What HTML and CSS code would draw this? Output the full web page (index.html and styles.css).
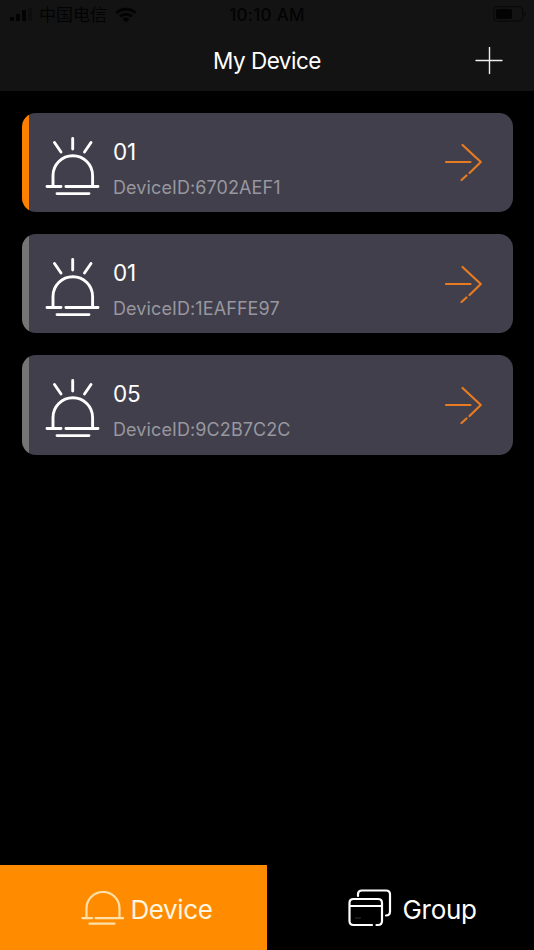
FILE: index.html
```html
<!DOCTYPE html>
<html lang="en">
<head>
    <meta charset="UTF-8">
    <meta name="viewport" content="width=device-width, initial-scale=1.0">
    <title>My Device</title>
    <link rel="stylesheet" href="styles.css">
</head>
<body>
    <svg class="defs" width="0" height="0">
        <symbol id="alarm" viewBox="0 0 56 60">
            <path d="M9.5 6.5l6.500 9.500M27.700 2.500v10.500M46 6.500L39.500 16"/>
            <path d="M8 50V39.500a19.800 19.800 0 0 1 39.600 0V50M2 50.500h14M20.900 50.500H53M12 57.600h32"/>
        </symbol>
        <symbol id="arrow" viewBox="0 0 40 40">
            <path d="M2 20h24.500M18.500 3l18.300 17-11.300 11M22.500 33.500L17.500 38"/>
        </symbol>
    </svg>

    <header class="header">
        <div class="status">
            <div class="carrier">
                <svg width="26" height="14" viewBox="0 0 26 14">
                    <path d="M0 9h4v4H0zM6 6h4v7H6zM12 2h4v11h-4z"/>
                    <path class="weak" d="M18 0h4v13h-4z"/>
                </svg>
                <span class="operator">中国电信</span>
                <svg class="wifi" width="22" height="16" viewBox="0 0 22 16">
                    <path d="M1.500 6a14 14 0 0 1 19 0M5 9.500a9 9 0 0 1 12 0"/>
                    <path class="dot" d="M7.500 12a5 5 0 0 1 7 0L11 15.500z"/>
                </svg>
            </div>
            <span class="time">10:10 AM</span>
            <svg class="battery" width="34" height="16" viewBox="0 0 34 16">
                <rect class="case" x=".7" y=".7" width="29" height="14.500" rx="4"/>
                <rect x="3" y="3" width="16" height="10" rx="2"/>
                <path d="M31.500 6q2 2 0 4z"/>
            </svg>
        </div>
        <div class="navbar">
            <h1>My Device</h1>
            <svg class="add" width="28" height="28" viewBox="0 0 28 28">
                <path d="M1 13.500h26M14.500 .5v26"/>
            </svg>
        </div>
    </header>

    <main class="devices">
        <div class="device online">
            <svg class="alarm"><use href="#alarm"/></svg>
            <div class="info">
                <div class="name">01</div>
                <div class="id">DeviceID:6702AEF1</div>
            </div>
            <svg class="arrow"><use href="#arrow"/></svg>
        </div>
        <div class="device">
            <svg class="alarm"><use href="#alarm"/></svg>
            <div class="info">
                <div class="name">01</div>
                <div class="id">DeviceID:1EAFFE97</div>
            </div>
            <svg class="arrow"><use href="#arrow"/></svg>
        </div>
        <div class="device">
            <svg class="alarm"><use href="#alarm"/></svg>
            <div class="info">
                <div class="name">05</div>
                <div class="id">DeviceID:9C2B7C2C</div>
            </div>
            <svg class="arrow"><use href="#arrow"/></svg>
        </div>
    </main>

    <nav class="tabs">
        <div class="tab active">
            <svg width="44" height="36" viewBox="0 0 44 36">
                <path d="M5.500 26V17.500a16.500 16.500 0 0 1 33 0V26M1.500 27.200H11M14.500 27.200H42M8.500 32.700h25"/>
            </svg>
            <span>Device</span>
        </div>
        <div class="tab group">
            <svg width="46" height="40" viewBox="0 0 46 40">
                <path d="M10 7V5.500q0-4 4-4H38q4 0 4 4V22.500q0 4-4 4"/>
                <path d="M24 36H5.500q-4 0-4-4V14q0-4 4-4h24.500q4 0 4 4v18q0 4-4 4h-1.500M1.500 17h32.500"/>
                <path class="faint" d="M7.500 29h5"/>
            </svg>
            <span>Group</span>
        </div>
    </nav>
</body>
</html>
```

FILE: styles.css
```css
* {
    box-sizing: border-box;
}
body {
    margin: 0;
    height: 950px;
    display: flex;
    flex-direction: column;
    background: #000;
    color: #fff;
    font-family: Inter, "Noto Sans CJK SC", sans-serif;
    overflow: hidden;
}
svg {
    display: block;
    flex: none;
    fill: none;
    stroke-linecap: round;
    stroke-linejoin: round;
}
.defs {
    display: none;
}
.header {
    height: 91px;
    background: #131313;
}
.status {
    height: 30px;
    padding: 0 7px 0 10px;
    display: grid;
    grid-template-columns: 1fr auto 1fr;
    align-items: center;
    color: #030303;
}
.status svg {
    fill: #030303;
}
.status .weak {
    fill: #0e0e0e;
}
.carrier {
    display: flex;
    align-items: center;
}
.operator {
    margin-left: 3px;
    font-size: 17px;
    line-height: 30px;
}
.status .wifi {
    margin-left: 8px;
    fill: none;
    stroke: #030303;
    stroke-width: 3;
    stroke-linecap: butt;
}
.wifi .dot {
    fill: #030303;
    stroke: none;
}
.time {
    padding-right: 3px;
    font-size: 17px;
    font-weight: 500;
    letter-spacing: 0.3px;
}
.battery {
    justify-self: end;
    margin-bottom: 2px;
}
.battery .case {
    fill: none;
    stroke: #0a0a0a;
    stroke-width: 1.3;
}
.navbar {
    height: 61px;
    padding-right: 31px;
    display: grid;
    grid-template-columns: 31px 1fr 28px;
    align-items: center;
}
.navbar h1 {
    grid-column: 2;
    margin: 0;
    padding-left: 28px;
    font-size: 22.5px;
    font-weight: 400;
    letter-spacing: -0.5px;
    text-align: center;
}
.add {
    stroke: #eee;
    stroke-width: 1.4;
}
.devices {
    flex: 1;
    padding: 21.5px 21.5px 0;
    display: flex;
    flex-direction: column;
    gap: 21.5px;
}
.device {
    height: 99.7px;
    padding: 0 29px 0 23.5px;
    display: flex;
    align-items: center;
    background: linear-gradient(90deg, #757575 7.5px, #403f4b 7.5px);
    border-radius: 14px;
}
.device.online {
    background: linear-gradient(90deg, #ff7f00 7.5px, #403f4b 7.5px);
}
.alarm {
    width: 56px;
    height: 60px;
    margin-top: 7px;
    stroke: #fff;
    stroke-width: 2.9;
}
.info {
    flex: 1;
    padding: 13px 0 0 12px;
}
.name {
    font-size: 22.5px;
    letter-spacing: -0.3px;
    line-height: 30px;
}
.id {
    margin-top: 8px;
    color: #98979f;
    font-size: 18px;
    line-height: 26px;
    letter-spacing: 0.1px;
}
.arrow {
    width: 40px;
    height: 40px;
    stroke: #e87b22;
    stroke-width: 2.2;
}
.tabs {
    height: 85.5px;
    display: flex;
}
.tab {
    flex: 1;
    display: flex;
    align-items: center;
    padding: 4px 0 0 80.5px;
    font-size: 26px;
    letter-spacing: -0.4px;
}
.tab svg {
    margin-right: 6px;
    stroke: #fff;
    stroke-width: 2.2;
}
.tab.active {
    background: #ff8c00;
    color: #fff5e0;
}
.tab.active svg {
    stroke: #ffe0a8;
}
.tab.group svg {
    margin-right: 9px;
}
.tab.group {
    letter-spacing: -0.3px;
}
.tab .faint {
    stroke: #333;
    stroke-width: 1;
}
```
